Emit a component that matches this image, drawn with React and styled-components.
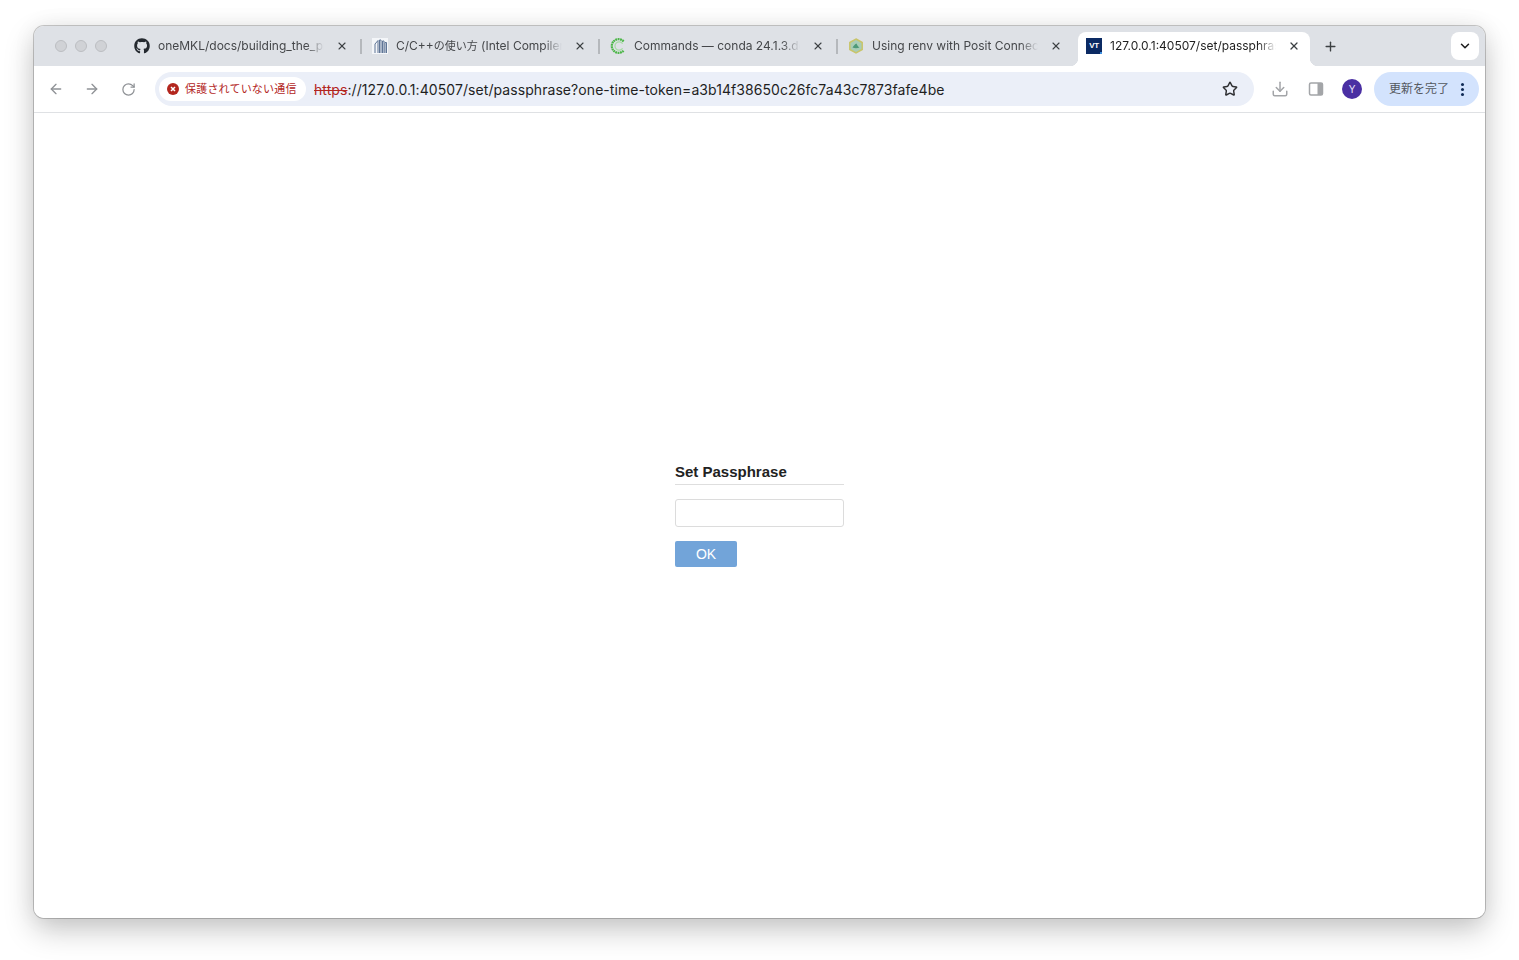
import React from 'react';
import styled, { createGlobalStyle } from 'styled-components';
import { FaGithub } from 'react-icons/fa';
import { ArrowLeft, ArrowRight, RotateCw, Star, X, Plus, ChevronDown, Download } from 'lucide-react';

const GlobalStyle = createGlobalStyle`
  html, body { margin: 0; padding: 0; background: #fff; height: 100%; }
  body { font-family: "Liberation Sans", "Noto Sans CJK JP", sans-serif; overflow: hidden; }
`;

const Page = styled.div`
  height: 960px;
  box-sizing: border-box;
  padding: 26px 34px 42px;
`;

const Window = styled.div`
  height: 100%;
  display: flex;
  flex-direction: column;
  background: #fff;
  border-radius: 10px;
  overflow: hidden;
  box-shadow: 0 0 0 1px rgba(0, 0, 0, 0.2), 0 12px 30px rgba(0, 0, 0, 0.22), 0 0 24px rgba(0, 0, 0, 0.06);
`;

const TabStrip = styled.div`
  flex: none;
  height: 40px;
  box-sizing: border-box;
  padding: 6px 6px 0 21px;
  display: flex;
  align-items: stretch;
  background: #dee1e6;
`;

const TrafficLights = styled.div`
  width: 65px;
  display: flex;
  gap: 8px;
  align-items: center;
  height: 28px;
`;

const Light = styled.span`
  width: 10px;
  height: 10px;
  border-radius: 50%;
  background: #d0d2d6;
  border: 1px solid #bcbec2;
`;

const Tab = styled.div`
  position: relative;
  width: 238px;
  box-sizing: border-box;
  flex: none;
  display: flex;
  align-items: center;
  height: 28px;
  padding: 0 8px 0 14px;
  color: #45474a;
  font-family: "Inter", "Noto Sans CJK JP", sans-serif;
  font-size: 12px;
  line-height: 16px;

  &::after {
    content: '';
    display: ${p => (p.$sep ? 'block' : 'none')};
    position: absolute;
    right: -4px;
    top: 7px;
    width: 2px;
    height: 15px;
    background: #b5b8bc;
  }
`;

const ActiveTab = styled(Tab)`
  width: 232px;
  height: 34px;
  padding: 0 8px 6px 8px;
  margin-left: 6px;
  background: #fff;
  color: #1f1f1f;
  border-radius: 8px 8px 0 0;

  &::before, &::after {
    content: '';
    display: block;
    position: absolute;
    top: auto;
    bottom: 0;
    width: 8px;
    height: 8px;
    background: #fff;
    -webkit-mask-image: radial-gradient(circle at 0 0, transparent 8px, #000 8.5px);
    mask-image: radial-gradient(circle at 0 0, transparent 8px, #000 8.5px);
  }
  &::before { left: -8px; }
  &::after {
    right: -8px;
    -webkit-mask-image: radial-gradient(circle at 100% 0, transparent 8px, #000 8.5px);
    mask-image: radial-gradient(circle at 100% 0, transparent 8px, #000 8.5px);
  }
`;

const Favicon = styled.span`
  flex: none;
  width: 16px;
  height: 16px;
  display: flex;
  align-items: center;
  justify-content: center;
  margin-right: 8px;
  color: #24292f;
`;

const VtIcon = styled(Favicon)`
  position: relative;
  background: #0b2a63;
  color: #fff;
  font-family: "Liberation Sans", sans-serif;
  font-size: 8px;
  font-weight: 700;
  letter-spacing: -0.4px;

  &::after {
    content: '';
    position: absolute;
    right: 0;
    bottom: 0;
    width: 2px;
    height: 2px;
    background: #3d8fe0;
  }
`;

const TabTitle = styled.span`
  flex: 1;
  min-width: 0;
  white-space: nowrap;
  overflow: hidden;
  -webkit-mask-image: linear-gradient(to right, #000 calc(100% - 18px), transparent);
  mask-image: linear-gradient(to right, #000 calc(100% - 18px), transparent);
`;

const CjkRun = styled.span`
  font-size: 11px;
`;

const TabClose = styled.span`
  flex: none;
  width: 16px;
  height: 16px;
  margin-left: 10px;
  display: flex;
  align-items: center;
  justify-content: center;
  color: #3c4043;
`;

const NewTab = styled.div`
  width: 28px;
  height: 28px;
  margin-left: 6px;
  display: flex;
  align-items: center;
  justify-content: center;
  color: #3c4043;
`;

const TabSearch = styled.div`
  width: 28px;
  height: 28px;
  margin-left: auto;
  border-radius: 8px;
  background: #fff;
  display: flex;
  align-items: center;
  justify-content: center;
  color: #1f1f1f;
`;

const Toolbar = styled.div`
  flex: none;
  height: 47px;
  box-sizing: border-box;
  padding: 6px 6px 6px 4px;
  display: flex;
  align-items: flex-start;
  background: #fff;
  border-bottom: 1px solid #dfe1e4;
`;

const NavButton = styled.span`
  flex: none;
  width: 36px;
  height: 34px;
  display: flex;
  align-items: center;
  justify-content: center;
  color: ${p => p.$color || '#8f9296'};
`;

const Omnibox = styled.div`
  flex: none;
  width: 1099px;
  height: 34px;
  margin-left: 9px;
  margin-right: 8px;
  box-sizing: border-box;
  padding: 0 12px 0 4px;
  display: flex;
  align-items: center;
  background: #ebeff8;
  border-radius: 17px;
`;

const SecurityChip = styled.div`
  flex: none;
  width: 147px;
  height: 24px;
  box-sizing: border-box;
  padding-left: 8px;
  display: flex;
  align-items: center;
  gap: 6px;
  background: #fff;
  border-radius: 12px;
  color: #b3261e;
  font-size: 11px;
  letter-spacing: 0.2px;
  line-height: 16px;
  white-space: nowrap;
`;

const Url = styled.div`
  margin-left: 8px;
  font-family: "Inter", "Liberation Sans", sans-serif;
  font-size: 14px;
  letter-spacing: 0.07px;
  color: #1f1f1f;
  white-space: nowrap;
`;

const Scheme = styled.span`
  color: #b3261e;
  text-decoration: line-through;
`;

const StarButton = styled.span`
  margin-left: auto;
  width: 24px;
  height: 24px;
  display: flex;
  align-items: center;
  justify-content: center;
  color: #303134;
`;

const Avatar = styled.span`
  flex: none;
  width: 20px;
  height: 20px;
  margin: 7px 12px 0 8px;
  border-radius: 50%;
  background: #4a2fa3;
  color: #e8e4f8;
  font-size: 10px;
  display: flex;
  align-items: center;
  justify-content: center;
`;

const UpdateButton = styled.div`
  flex: none;
  width: 105px;
  height: 34px;
  box-sizing: border-box;
  padding-left: 15px;
  display: flex;
  align-items: center;
  background: #d3e3fd;
  border-radius: 17px;
  color: #54585e;
  font-size: 12px;
  line-height: 16px;
`;

const Dots = styled.span`
  margin-left: 12px;
  display: flex;
  flex-direction: column;
  gap: 2px;

  i {
    width: 3px;
    height: 3px;
    border-radius: 50%;
    background: #0f2a55;
  }
`;

const Content = styled.main`
  flex: 1;
  padding-bottom: 2px;
  display: flex;
  align-items: center;
  justify-content: center;
  background: #fff;
`;

const Form = styled.form`
  width: 169px;
  margin: 0;
`;

const Title = styled.h2`
  margin: 0 0 14px;
  height: 22px;
  box-sizing: border-box;
  border-bottom: 1px solid #dedede;
  font-size: 15px;
  line-height: 18px;
  font-weight: 700;
  color: #222;
`;

const Input = styled.input`
  display: block;
  width: 100%;
  height: 28px;
  box-sizing: border-box;
  margin: 0 0 14px;
  border: 1px solid #dcdcdc;
  border-radius: 3px;
  background: #fff;
  outline: none;
`;

const Button = styled.button`
  display: block;
  width: 62px;
  height: 26px;
  padding: 0;
  border: 0;
  border-radius: 2px;
  background: #72a4d9;
  color: #fff;
  font-family: inherit;
  font-size: 14px;
`;

const CppIcon = () => (
  <svg width="16" height="16" viewBox="0 0 16 16">
    <rect width="16" height="16" fill="#f4f6f9" />
    <path d="M3 15V6L6 2.5V15M7.5 15V2H9V15M10.5 15V3H12V15M13 15V4.5H14.5V15" fill="none" stroke="#5f7596" strokeWidth="1" />
  </svg>
);

const CondaIcon = () => (
  <svg width="16" height="16" viewBox="0 0 16 16">
    <path d="M13.6 3.4A6.8 6.8 0 1 0 13.6 12.6" fill="none" stroke="#4cb648" strokeWidth="2.2" strokeDasharray="1.8 .5" />
    <path d="M12.6 5.6A4.2 4.2 0 1 0 12.6 10.4" fill="none" stroke="#a6dca4" strokeWidth="1.2" />
  </svg>
);

const PositIcon = () => (
  <svg width="16" height="16" viewBox="0 0 16 16">
    <path d="M8 1L14.2 4.5V11.5L8 15L1.8 11.5V4.5Z" fill="#a9cdb6" stroke="#c9c56a" strokeWidth="1.5" />
    <path d="M4.5 9.5C6 7.5 7 6 8.5 5.5C9 7 10 8.5 11.5 9.5C9.5 10.5 6.5 10.5 4.5 9.5Z" fill="#4f9a78" />
  </svg>
);

const tabs = [
  { id: 'mkl', title: 'oneMKL/docs/building_the_project.rst', icon: <FaGithub size={16} />, sep: true },
  { id: 'cpp', title: <>C/C++<CjkRun>の使い方</CjkRun> (Intel Compiler)</>, icon: <CppIcon />, sep: true },
  { id: 'conda', title: 'Commands — conda 24.1.3.dev', icon: <CondaIcon />, sep: true },
  { id: 'renv', title: 'Using renv with Posit Connect', icon: <PositIcon />, sep: false },
];

const App = () => (
  <Page>
    <GlobalStyle />
    <Window>
      <TabStrip>
        <TrafficLights>
          <Light />
          <Light />
          <Light />
        </TrafficLights>
        {tabs.map(t => (
          <Tab key={t.id} $sep={t.sep}>
            <Favicon>{t.icon}</Favicon>
            <TabTitle>{t.title}</TabTitle>
            <TabClose><X size={12} strokeWidth={2.2} /></TabClose>
          </Tab>
        ))}
        <ActiveTab>
          <VtIcon>VT</VtIcon>
          <TabTitle>127.0.0.1:40507/set/passphrase</TabTitle>
          <TabClose><X size={12} strokeWidth={2.6} /></TabClose>
        </ActiveTab>
        <NewTab><Plus size={15} strokeWidth={2.2} /></NewTab>
        <TabSearch><ChevronDown size={14} strokeWidth={2.6} /></TabSearch>
      </TabStrip>
      <Toolbar>
        <NavButton><ArrowLeft size={16} /></NavButton>
        <NavButton><ArrowRight size={16} /></NavButton>
        <NavButton><RotateCw size={15} /></NavButton>
        <Omnibox>
          <SecurityChip>
            <svg width="12" height="12" viewBox="0 0 12 12">
              <circle cx="6" cy="6" r="6" fill="#b3261e" />
              <path d="M4 4L8 8M8 4L4 8" stroke="#fff" strokeWidth="1.5" />
            </svg>
            保護されていない通信
          </SecurityChip>
          <Url>
            <Scheme>https</Scheme>://127.0.0.1:40507/set/passphrase?one-time-token=a3b14f38650c26fc7a43c7873fafe4be
          </Url>
          <StarButton><Star size={16} strokeWidth={2.2} /></StarButton>
        </Omnibox>
        <NavButton $color="#a3a5a8"><Download size={18} strokeWidth={2} /></NavButton>
        <NavButton $color="#a3a5a8">
          <svg width="16" height="16" viewBox="0 0 16 16">
            <rect x="1.5" y="2" width="13" height="12" rx="1.5" fill="#fff" stroke="#a3a5a8" strokeWidth="1.5" />
            <rect x="9.5" y="2" width="5" height="12" fill="#a3a5a8" />
          </svg>
        </NavButton>
        <Avatar>Y</Avatar>
        <UpdateButton>
          更新を完了
          <Dots><i /><i /><i /></Dots>
        </UpdateButton>
      </Toolbar>
      <Content>
        <Form onSubmit={e => e.preventDefault()}>
          <Title>Set Passphrase</Title>
          <Input type="password" />
          <Button type="submit">OK</Button>
        </Form>
      </Content>
    </Window>
  </Page>
);

export default App;
